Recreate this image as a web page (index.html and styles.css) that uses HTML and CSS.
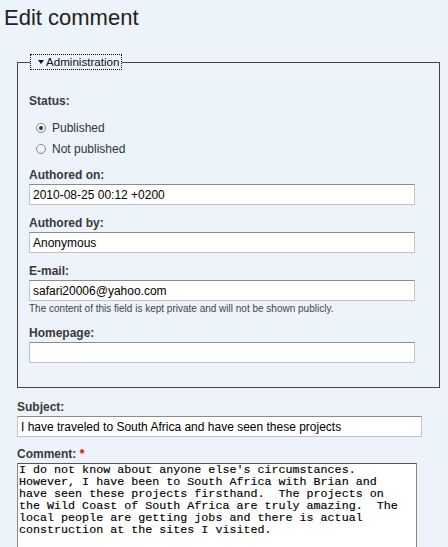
FILE: index.html
```html
<!DOCTYPE html>
<html lang="en">
<head>
    <meta charset="UTF-8">
    <title>Edit comment</title>
    <link rel="stylesheet" href="styles.css">
</head>
<body>

    <h1 class="title">Edit comment</h1>

    <form class="comment-form">
        <fieldset class="admin">
            <legend><a href="#" class="toggle"><span class="arrow"></span>Administration</a></legend>

            <div class="form-item">
                <label class="status-label">Status:</label>
                <div class="radios">
                    <label class="radio"><input type="radio" name="status" checked> Published</label>
                    <label class="radio"><input type="radio" name="status"> Not published</label>
                </div>
            </div>

            <div class="form-item">
                <label for="date">Authored on:</label>
                <input type="text" id="date" class="field" value="2010-08-25 00:12 +0200">
            </div>

            <div class="form-item">
                <label for="author">Authored by:</label>
                <input type="text" id="author" class="field" value="Anonymous">
            </div>

            <div class="form-item">
                <label for="mail">E-mail:</label>
                <input type="text" id="mail" class="field" value="safari20006@yahoo.com">
                <div class="description">The content of this field is kept private and will not be shown publicly.</div>
            </div>

            <div class="form-item">
                <label for="homepage">Homepage:</label>
                <input type="text" id="homepage" class="field" value="">
            </div>
        </fieldset>

        <div class="form-item outer subject-item">
            <label for="subject">Subject:</label>
            <input type="text" id="subject" class="field subject" value="I have traveled to South Africa and have seen these projects">
        </div>

        <div class="form-item outer comment-item">
            <label for="comment">Comment: <span class="required">*</span></label>
            <textarea id="comment" class="comment" rows="7" spellcheck="false">I do not know about anyone else's circumstances.
However, I have been to South Africa with Brian and
have seen these projects firsthand.  The projects on
the Wild Coast of South Africa are truly amazing.  The
local people are getting jobs and there is actual
construction at the sites I visited.</textarea>
        </div>
    </form>

</body>
</html>
```

FILE: styles.css
```css
body {
    margin: 0;
    padding: 0;
    background-color: #edf3fb;
    font-family: "Liberation Sans", Arial, sans-serif;
    font-size: 12px;
    color: #333;
}
.title {
    margin: 5px 0 0 4px;
    font-size: 22px;
    line-height: 25px;
    font-weight: normal;
    color: #222;
}
.comment-form {
    margin: 24px 0 0 17px;
    width: 423px;
}
.admin {
    box-sizing: border-box;
    width: 423px;
    min-width: 0;
    margin: 0;
    padding: 24px 11px 24px 11px;
    border: 1px solid #454545;
}
.admin legend {
    margin-left: 1px;
    padding: 0;
}
.toggle {
    display: block;
    border: 1px dotted #111;
    padding: 0 2px 0 7px;
    line-height: 14px;
    font-size: 11.6px;
    color: #111;
    text-decoration: none;
}
.arrow {
    display: inline-block;
    width: 0;
    height: 0;
    border-left: 3px solid transparent;
    border-right: 3px solid transparent;
    border-top: 4px solid #111;
    margin-right: 2px;
    vertical-align: 2px;
}
.form-item {
    margin-top: 11px;
}
.admin .form-item:first-of-type {
    margin-top: 0;
}
.form-item > label {
    display: block;
    font-weight: bold;
    line-height: 15px;
    margin-bottom: 1px;
    color: #3a3a3a;
}
.radios {
    margin-top: 8px;
    margin-bottom: -2px;
}
.radio {
    display: flex;
    align-items: center;
    height: 21px;
    padding-left: 7px;
    color: #333;
}
.radio input {
    appearance: none;
    -webkit-appearance: none;
    box-sizing: border-box;
    width: 10px;
    height: 10px;
    margin: 0 6px 0 0;
    border: 1px solid #8a8a8a;
    border-radius: 50%;
    background: linear-gradient(#fff, #e6e6e6);
    position: relative;
}
.radio input:checked::after {
    content: "";
    position: absolute;
    left: 2px;
    top: 2px;
    width: 4px;
    height: 4px;
    border-radius: 50%;
    background: #333;
}
.field {
    box-sizing: border-box;
    display: block;
    width: 386px;
    height: 21px;
    margin: 0;
    padding: 0 3px;
    border: 1px solid #c4c4c4;
    border-top-color: #8c8c8c;
    background: #fff;
    font-family: "Liberation Sans", Arial, sans-serif;
    font-size: 12px;
    color: #000;
}
.subject {
    width: 405px;
    padding-left: 3px;
}
.description {
    margin-top: 1px;
    font-size: 10px;
    line-height: 13px;
    color: #444;
}
.subject-item {
    margin-top: 12px;
}
.comment-item {
    margin-top: 10px;
}
.required {
    color: #e00;
}
.comment {
    box-sizing: border-box;
    display: block;
    width: 400px;
    height: 84px;
    margin: 0;
    padding: 0 1px;
    border: 1px solid #888;
    border-top-color: #555;
    border-bottom: none;
    background: #fff;
    font-family: "Liberation Mono", "Courier New", monospace;
    font-size: 11.7px;
    line-height: 12px;
    color: #000;
    -webkit-text-stroke: 0.15px #000;
    resize: none;
    overflow: hidden;
}
```
